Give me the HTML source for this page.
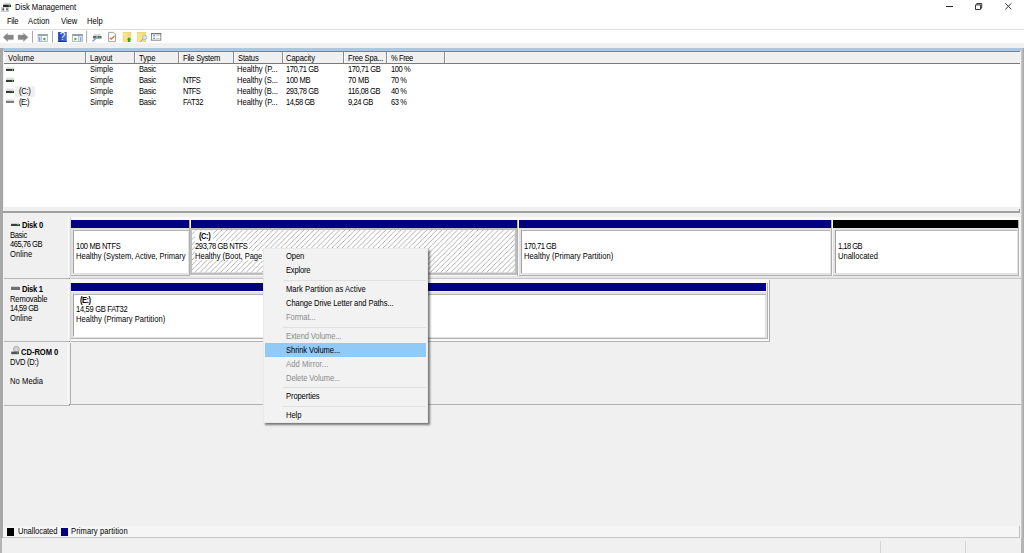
<!DOCTYPE html>
<html><head><meta charset="utf-8"><title>Disk Management</title>
<style>
html,body{margin:0;padding:0;}
body{width:1024px;height:553px;overflow:hidden;background:#f0f0f0;position:relative;font-family:"Liberation Sans",sans-serif;}
.t{position:absolute;white-space:nowrap;display:block;}
.r{position:absolute;}
svg{position:absolute;overflow:visible;}
</style></head><body>
<div class="r" style="left:0px;top:0px;width:1024px;height:43px;background:#fff;"></div>
<div class="r" style="left:0px;top:29px;width:1024px;height:1px;background:#dcdce4;"></div>
<svg style="left:0px;top:0px" width="13" height="13" viewBox="0 0 13 13">
<defs><linearGradient id="tg" x1="0" y1="0" x2="0" y2="1"><stop offset="0" stop-color="#f6f6f6"/><stop offset="1" stop-color="#c4c4c4"/></linearGradient></defs>
<path d="M3.8 2.2 H10.3 L11 4.8 H3 Z" fill="url(#tg)"/>
<rect x="3" y="4.7" width="8" height="2.2" rx="0.5" fill="#242424"/><rect x="8.6" y="5" width="1.4" height="1.6" fill="#2eb82e"/>
<rect x="1.1" y="7" width="7.8" height="4.9" fill="#c6c6c6"/><rect x="4.2" y="7.4" width="1.9" height="3.4" fill="#f6f6f6"/>
<rect x="2.5" y="8.4" width="1.5" height="1.8" fill="#5a5a5a"/><rect x="6.2" y="8.4" width="1.6" height="1.8" fill="#6a6a6a"/></svg>
<span class="t" style="left:15.00px;top:3px;font-size:8.2px;line-height:9px;color:#000;letter-spacing:-0.001px;transform:scaleX(0.927);transform-origin:0 0;">Disk Management</span>
<span class="t" style="left:7.00px;top:17px;font-size:8.2px;line-height:9px;color:#000;letter-spacing:-0.310px;transform:scaleX(0.927);transform-origin:0 0;">File</span>
<span class="t" style="left:28.30px;top:17px;font-size:8.2px;line-height:9px;color:#000;letter-spacing:0.085px;transform:scaleX(0.927);transform-origin:0 0;">Action</span>
<span class="t" style="left:60.70px;top:17px;font-size:8.2px;line-height:9px;color:#000;letter-spacing:-0.001px;transform:scaleX(0.927);transform-origin:0 0;">View</span>
<span class="t" style="left:87.00px;top:17px;font-size:8.2px;line-height:9px;color:#000;letter-spacing:-0.001px;transform:scaleX(0.927);transform-origin:0 0;">Help</span>
<div class="r" style="left:946.2px;top:5.95px;width:6.7px;height:0.95px;background:#2a2a2a;"></div>
<svg style="left:974.9px;top:2.8px" width="7.2" height="7" viewBox="0 0 7.2 7"><path d="M0.5 1.9 H5.6 V6.5 H0.5 Z M1.8 1.9 V0.5 H6.7 V5.1 H5.6" fill="none" stroke="#2a2a2a" stroke-width="0.95"/></svg>
<svg style="left:1004.6px;top:3.1px" width="6.8" height="6.6" viewBox="0 0 6.8 6.6"><path d="M0.3 0.3 L6.4 6.3 M6.4 0.3 L0.3 6.3" fill="none" stroke="#2a2a2a" stroke-width="0.95"/></svg>
<svg style="left:0px;top:30px" width="170" height="14" viewBox="0 30 170 14">
<defs><linearGradient id="hg" x1="0" y1="0" x2="1" y2="0"><stop offset="0" stop-color="#2442b4"/><stop offset="1" stop-color="#4a72e2"/></linearGradient>
<linearGradient id="fg" x1="0" y1="0" x2="1" y2="0"><stop offset="0" stop-color="#fbe89c"/><stop offset="1" stop-color="#f6d870"/></linearGradient></defs>
<path d="M3.05 37.3 L7.7 33 V34.9 H13.5 V39.7 H7.7 V41.7 Z" fill="#858585" stroke="#b4b4b4" stroke-width="0.5"/>
<path d="M28.2 37.3 L23.4 33 V34.9 H18 V39.7 H23.4 V41.7 Z" fill="#858585" stroke="#b4b4b4" stroke-width="0.5"/>
<rect x="32" y="31" width="0.9" height="11.7" fill="#a0a0a0"/>
<rect x="52" y="31" width="0.9" height="11.7" fill="#a0a0a0"/>
<rect x="86.2" y="31" width="0.9" height="11.7" fill="#a0a0a0"/>
<!-- show/hide tree -->
<rect x="37.8" y="34.1" width="9.9" height="7.6" fill="#fafcff"/><rect x="37.8" y="34.1" width="9.9" height="1.9" fill="#98a4b6"/>
<rect x="38.2" y="36" width="3" height="5.4" fill="#dfe8f4"/><rect x="39" y="37.2" width="1.2" height="3.6" fill="#6ea4e0"/>
<rect x="41.3" y="36" width="0.7" height="5.7" fill="#a8b0bc"/>
<path d="M45.3 37.3 V40.8 L42.6 39.05 Z" fill="#34b434"/>
<rect x="38.1" y="34.4" width="9.3" height="7" fill="none" stroke="#9aa4b2" stroke-width="0.7"/>
<!-- help -->
<rect x="58.1" y="32" width="8.7" height="10" fill="url(#hg)"/><rect x="58.1" y="41" width="8.7" height="1" fill="#1c3490"/>
<text x="62.6" y="40.3" font-family="Liberation Sans" font-size="10" fill="#fff" text-anchor="middle">?</text>
<!-- show/hide action pane -->
<rect x="72.2" y="34.1" width="10.5" height="7.6" fill="#fafcff"/><rect x="72.2" y="34.1" width="10.5" height="1.9" fill="#8e9aac"/>
<rect x="79" y="36" width="3.4" height="5.4" fill="#dfe8f4"/><rect x="80" y="37.2" width="1.2" height="3.6" fill="#6ea4e0"/>
<rect x="78" y="36" width="0.7" height="5.7" fill="#a8b0bc"/>
<path d="M74.5 37.3 V40.8 L77 39.05 Z" fill="#34b434"/>
<rect x="72.5" y="34.4" width="9.9" height="7" fill="none" stroke="#9aa4b2" stroke-width="0.7"/>
<!-- connect -->
<path d="M93.8 34 H100.8 L101.5 36 H93.1 Z" fill="#dcdcdc"/>
<rect x="93.1" y="35.9" width="8.4" height="2.7" rx="0.5" fill="#5c5c5c"/><rect x="99" y="36.5" width="1.3" height="1.5" fill="#2cc42c"/>
<path d="M97.2 37.2 L92.4 41.5" stroke="#7e9ebc" stroke-width="1.3" fill="none"/><circle cx="97" cy="37.3" r="1.2" fill="#8eaac6"/>
<!-- doc check -->
<path d="M108.5 32.4 H113.6 L115.5 34.3 V41.6 H108.5 Z" fill="#fff" stroke="#8e8e8e" stroke-width="0.8"/>
<path d="M109.7 37.6 L111.3 39.2 L114.6 35.9" fill="none" stroke="#e8662e" stroke-width="1.3"/>
<!-- folder up -->
<rect x="123.2" y="32.3" width="7.5" height="9.4" fill="url(#fg)" stroke="#f0cc5c" stroke-width="0.7"/>
<path d="M129 37.2 L131.3 39.6 H130.1 V42 H127.9 V39.6 H126.7 Z" fill="#22ae22"/>
<!-- folder search -->
<rect x="137.5" y="32.3" width="7.9" height="9.4" fill="url(#fg)" stroke="#f0cc5c" stroke-width="0.7"/>
<path d="M143.2 39 L140.4 41.7" stroke="#909aa4" stroke-width="1"/>
<circle cx="144.7" cy="37.5" r="2" fill="#d4e8f6" stroke="#9ab4cc" stroke-width="0.8"/>
<!-- list -->
<rect x="151.5" y="33.5" width="9.3" height="6.7" fill="#fff" stroke="#7e7e7e" stroke-width="0.9"/><rect x="151.1" y="33.1" width="10.1" height="1.2" fill="#707070"/>
<rect x="153.3" y="35.1" width="1.5" height="1.4" fill="#3c8ae0"/><rect x="153.3" y="37.7" width="1.5" height="1.4" fill="#3c8ae0"/>
<rect x="156.3" y="35.5" width="3.2" height="0.7" fill="#a8a8a8"/><rect x="156.3" y="38.1" width="3.2" height="0.7" fill="#a8a8a8"/>
</svg>
<div class="r" style="left:0px;top:47.8px;width:3.4px;height:490.2px;background:#a8a8a8;"></div>
<div class="r" style="left:1021.2px;top:47.8px;width:2.8px;height:505.2px;background:linear-gradient(to right,#cfcfcf,#a2a2a2);"></div>
<div class="r" style="left:3px;top:48px;width:1018px;height:3px;background:#a9c8e8;"></div>
<div class="r" style="left:3.5px;top:51px;width:1016.5px;height:156.5px;background:#fff;"></div>
<div class="r" style="left:3.5px;top:51px;width:1016.5px;height:1px;background:#808080;"></div>
<div class="r" style="left:4.5px;top:52px;width:1015.5px;height:11px;background:#f0f0f0;"></div>
<div class="r" style="left:3.5px;top:63px;width:1016.5px;height:1px;background:#7a7a7a;"></div>
<div class="r" style="left:85.2px;top:52px;width:1px;height:11px;background:#8c8c8c;"></div>
<div class="r" style="left:86.2px;top:52px;width:1px;height:11px;background:#fff;"></div>
<div class="r" style="left:134.2px;top:52px;width:1px;height:11px;background:#8c8c8c;"></div>
<div class="r" style="left:135.2px;top:52px;width:1px;height:11px;background:#fff;"></div>
<div class="r" style="left:177.5px;top:52px;width:1px;height:11px;background:#8c8c8c;"></div>
<div class="r" style="left:178.5px;top:52px;width:1px;height:11px;background:#fff;"></div>
<div class="r" style="left:232.89999999999998px;top:52px;width:1px;height:11px;background:#8c8c8c;"></div>
<div class="r" style="left:233.89999999999998px;top:52px;width:1px;height:11px;background:#fff;"></div>
<div class="r" style="left:281.9px;top:52px;width:1px;height:11px;background:#8c8c8c;"></div>
<div class="r" style="left:282.9px;top:52px;width:1px;height:11px;background:#fff;"></div>
<div class="r" style="left:343.4px;top:52px;width:1px;height:11px;background:#8c8c8c;"></div>
<div class="r" style="left:344.4px;top:52px;width:1px;height:11px;background:#fff;"></div>
<div class="r" style="left:385.9px;top:52px;width:1px;height:11px;background:#8c8c8c;"></div>
<div class="r" style="left:386.9px;top:52px;width:1px;height:11px;background:#fff;"></div>
<div class="r" style="left:443.59999999999997px;top:52px;width:1px;height:11px;background:#8c8c8c;"></div>
<div class="r" style="left:444.59999999999997px;top:52px;width:1px;height:11px;background:#fff;"></div>
<span class="t" style="left:7.50px;top:54px;font-size:8.2px;line-height:9px;color:#000;letter-spacing:0.188px;transform:scaleX(0.927);transform-origin:0 0;">Volume</span>
<span class="t" style="left:89.90px;top:54px;font-size:8.2px;line-height:9px;color:#000;letter-spacing:-0.076px;transform:scaleX(0.927);transform-origin:0 0;">Layout</span>
<span class="t" style="left:139.20px;top:54px;font-size:8.2px;line-height:9px;color:#000;letter-spacing:-0.001px;transform:scaleX(0.927);transform-origin:0 0;">Type</span>
<span class="t" style="left:182.60px;top:54px;font-size:8.2px;line-height:9px;color:#000;letter-spacing:-0.255px;transform:scaleX(0.927);transform-origin:0 0;">File System</span>
<span class="t" style="left:237.50px;top:54px;font-size:8.2px;line-height:9px;color:#000;letter-spacing:-0.171px;transform:scaleX(0.927);transform-origin:0 0;">Status</span>
<span class="t" style="left:286.20px;top:54px;font-size:8.2px;line-height:9px;color:#000;letter-spacing:-0.091px;transform:scaleX(0.927);transform-origin:0 0;">Capacity</span>
<span class="t" style="left:348.00px;top:54px;font-size:8.2px;line-height:9px;color:#000;letter-spacing:-0.245px;transform:scaleX(0.927);transform-origin:0 0;">Free Spa...</span>
<span class="t" style="left:390.50px;top:54px;font-size:8.2px;line-height:9px;color:#000;letter-spacing:-0.477px;transform:scaleX(0.927);transform-origin:0 0;">% Free</span>
<div class="r" style="left:6.3px;top:66.60px;width:7.8px;height:2.6px;background:linear-gradient(#f4f4f4,#cfcfcf);"></div>
<div class="r" style="left:6.1px;top:69.0px;width:8.4px;height:2.2px;background:#383838;"></div>
<div class="r" style="left:11.6px;top:69.3px;width:1.5px;height:1.5px;background:#2fc42f;"></div>
<span class="t" style="left:89.80px;top:65px;font-size:8.2px;line-height:9px;color:#000;letter-spacing:-0.001px;transform:scaleX(0.927);transform-origin:0 0;">Simple</span>
<span class="t" style="left:139.20px;top:65px;font-size:8.2px;line-height:9px;color:#000;letter-spacing:-0.321px;transform:scaleX(0.927);transform-origin:0 0;">Basic</span>
<span class="t" style="left:237.20px;top:65px;font-size:8.2px;line-height:9px;color:#000;letter-spacing:-0.020px;transform:scaleX(0.927);transform-origin:0 0;">Healthy (P...</span>
<span class="t" style="left:286.20px;top:65px;font-size:8.2px;line-height:9px;color:#000;letter-spacing:-0.485px;transform:scaleX(0.927);transform-origin:0 0;">170,71 GB</span>
<span class="t" style="left:348.00px;top:65px;font-size:8.2px;line-height:9px;color:#000;letter-spacing:-0.485px;transform:scaleX(0.927);transform-origin:0 0;">170,71 GB</span>
<span class="t" style="left:390.60px;top:65px;font-size:8.2px;line-height:9px;color:#000;letter-spacing:-0.475px;transform:scaleX(0.927);transform-origin:0 0;">100 %</span>
<div class="r" style="left:6.3px;top:77.30px;width:7.8px;height:2.6px;background:linear-gradient(#f4f4f4,#cfcfcf);"></div>
<div class="r" style="left:6.1px;top:79.7px;width:8.4px;height:2.2px;background:#383838;"></div>
<div class="r" style="left:11.6px;top:80.0px;width:1.5px;height:1.5px;background:#2fc42f;"></div>
<span class="t" style="left:89.80px;top:76px;font-size:8.2px;line-height:9px;color:#000;letter-spacing:-0.001px;transform:scaleX(0.927);transform-origin:0 0;">Simple</span>
<span class="t" style="left:139.20px;top:76px;font-size:8.2px;line-height:9px;color:#000;letter-spacing:-0.321px;transform:scaleX(0.927);transform-origin:0 0;">Basic</span>
<span class="t" style="left:182.80px;top:76px;font-size:8.2px;line-height:9px;color:#000;letter-spacing:-0.741px;transform:scaleX(0.927);transform-origin:0 0;">NTFS</span>
<span class="t" style="left:237.20px;top:76px;font-size:8.2px;line-height:9px;color:#000;letter-spacing:-0.085px;transform:scaleX(0.927);transform-origin:0 0;">Healthy (S...</span>
<span class="t" style="left:286.20px;top:76px;font-size:8.2px;line-height:9px;color:#000;letter-spacing:-0.323px;transform:scaleX(0.927);transform-origin:0 0;">100 MB</span>
<span class="t" style="left:348.00px;top:76px;font-size:8.2px;line-height:9px;color:#000;letter-spacing:-0.188px;transform:scaleX(0.927);transform-origin:0 0;">70 MB</span>
<span class="t" style="left:390.60px;top:76px;font-size:8.2px;line-height:9px;color:#000;letter-spacing:-0.465px;transform:scaleX(0.927);transform-origin:0 0;">70 %</span>
<div class="r" style="left:15.2px;top:86px;width:19.6px;height:10.5px;background:#f0f0f0;"></div>
<div class="r" style="left:6.3px;top:88.10px;width:7.8px;height:2.6px;background:linear-gradient(#f4f4f4,#cfcfcf);"></div>
<div class="r" style="left:6.1px;top:90.5px;width:8.4px;height:2.2px;background:#383838;"></div>
<div class="r" style="left:11.6px;top:90.8px;width:1.5px;height:1.5px;background:#2fc42f;"></div>
<span class="t" style="left:18.80px;top:87px;font-size:8.2px;line-height:9px;color:#000;letter-spacing:-0.341px;transform:scaleX(0.927);transform-origin:0 0;">(C:)</span>
<span class="t" style="left:89.80px;top:87px;font-size:8.2px;line-height:9px;color:#000;letter-spacing:-0.001px;transform:scaleX(0.927);transform-origin:0 0;">Simple</span>
<span class="t" style="left:139.20px;top:87px;font-size:8.2px;line-height:9px;color:#000;letter-spacing:-0.321px;transform:scaleX(0.927);transform-origin:0 0;">Basic</span>
<span class="t" style="left:182.80px;top:87px;font-size:8.2px;line-height:9px;color:#000;letter-spacing:-0.741px;transform:scaleX(0.927);transform-origin:0 0;">NTFS</span>
<span class="t" style="left:237.20px;top:87px;font-size:8.2px;line-height:9px;color:#000;letter-spacing:-0.085px;transform:scaleX(0.927);transform-origin:0 0;">Healthy (B...</span>
<span class="t" style="left:286.20px;top:87px;font-size:8.2px;line-height:9px;color:#000;letter-spacing:-0.485px;transform:scaleX(0.927);transform-origin:0 0;">293,78 GB</span>
<span class="t" style="left:348.00px;top:87px;font-size:8.2px;line-height:9px;color:#000;letter-spacing:-0.411px;transform:scaleX(0.927);transform-origin:0 0;">116,08 GB</span>
<span class="t" style="left:390.60px;top:87px;font-size:8.2px;line-height:9px;color:#000;letter-spacing:-0.465px;transform:scaleX(0.927);transform-origin:0 0;">40 %</span>
<div class="r" style="left:6.3px;top:98.90px;width:7.8px;height:2.6px;background:linear-gradient(#f4f4f4,#cfcfcf);"></div>
<div class="r" style="left:6.1px;top:101.30000000000001px;width:8.4px;height:2.2px;background:#7c7c7c;"></div>
<span class="t" style="left:18.80px;top:98px;font-size:8.2px;line-height:9px;color:#000;letter-spacing:-0.578px;transform:scaleX(0.927);transform-origin:0 0;">(E:)</span>
<span class="t" style="left:89.80px;top:98px;font-size:8.2px;line-height:9px;color:#000;letter-spacing:-0.001px;transform:scaleX(0.927);transform-origin:0 0;">Simple</span>
<span class="t" style="left:139.20px;top:98px;font-size:8.2px;line-height:9px;color:#000;letter-spacing:-0.321px;transform:scaleX(0.927);transform-origin:0 0;">Basic</span>
<span class="t" style="left:182.80px;top:98px;font-size:8.2px;line-height:9px;color:#000;letter-spacing:-0.373px;transform:scaleX(0.927);transform-origin:0 0;">FAT32</span>
<span class="t" style="left:237.20px;top:98px;font-size:8.2px;line-height:9px;color:#000;letter-spacing:-0.020px;transform:scaleX(0.927);transform-origin:0 0;">Healthy (P...</span>
<span class="t" style="left:286.20px;top:98px;font-size:8.2px;line-height:9px;color:#000;letter-spacing:-0.488px;transform:scaleX(0.927);transform-origin:0 0;">14,58 GB</span>
<span class="t" style="left:348.00px;top:98px;font-size:8.2px;line-height:9px;color:#000;letter-spacing:-0.468px;transform:scaleX(0.927);transform-origin:0 0;">9,24 GB</span>
<span class="t" style="left:390.60px;top:98px;font-size:8.2px;line-height:9px;color:#000;letter-spacing:-0.465px;transform:scaleX(0.927);transform-origin:0 0;">63 %</span>
<div class="r" style="left:3.2px;top:207.3px;width:1017.6px;height:4px;background:#f0f0f0;"></div>
<div class="r" style="left:3.2px;top:211.4px;width:1016.6px;height:1.4px;background:#a0a0a0;"></div>
<div class="r" style="left:1018.8px;top:209px;width:1px;height:3.5px;background:#909090;"></div>
<div class="r" style="left:70.7px;top:217.2px;width:949px;height:59px;background:#f9f9f5;"></div>
<div class="r" style="left:4px;top:213.4px;width:65.2px;height:64.6px;background:#f0f0f0;"></div>
<div class="r" style="left:68.2px;top:215.9px;width:1.2px;height:61.599999999999994px;background:#fbfbfb;"></div>
<div class="r" style="left:69.5px;top:216.9px;width:1.2px;height:61.099999999999994px;background:#d2d2d2;"></div>
<div class="r" style="left:4px;top:278.0px;width:66.2px;height:0.9px;background:#b8b8b8;"></div>
<div class="r" style="left:69.2px;top:277.8px;width:1.0px;height:1.1px;background:#808080;"></div>
<div class="r" style="left:70.9px;top:219.6px;width:118.04999999999998px;height:8.3px;background:#000080;"></div>
<div class="r" style="left:70.9px;top:228.0px;width:119.44999999999999px;height:47.9px;background:#e2e2e2;"></div>
<div class="r" style="left:70.9px;top:274.7px;width:119.44999999999999px;height:1.2px;background:#b4b4b4;"></div>
<div class="r" style="left:73.2px;top:230.1px;width:115.44999999999999px;height:0.9px;background:#b4b4b4;"></div>
<div class="r" style="left:73.2px;top:230.1px;width:0.9px;height:42.9px;background:#a0a0a0;"></div>
<div class="r" style="left:74.10000000000001px;top:231.0px;width:114.14999999999999px;height:42.3px;background:#fff;"></div>
<div class="r" style="left:189.25px;top:219.6px;width:0.9px;height:56.3px;background:#b0b0b0;"></div>
<div class="r" style="left:190.95px;top:219.6px;width:325.84999999999997px;height:8.3px;background:#000080;"></div>
<div class="r" style="left:189.64999999999998px;top:228.0px;width:327.54999999999995px;height:46.8px;background:#bebebe;"></div>
<svg style="left:192.40px;top:230.00px" width="322.80" height="42.50"><defs><pattern id="hp" width="5.12" height="5.12" patternUnits="userSpaceOnUse" patternTransform="translate(4.29,0)"><path d="M-1 1 L1 -1 M-1 6.12 L6.12 -1 M4.12 6.12 L6.12 4.12" stroke="#9c9c9c" stroke-width="0.78" fill="none"/></pattern></defs><rect width="322.80" height="42.50" fill="#fff"/><rect width="322.80" height="42.50" fill="url(#hp)"/></svg>
<div class="r" style="left:517.0999999999999px;top:219.6px;width:0.9px;height:56.3px;background:#b0b0b0;"></div>
<div class="r" style="left:518.8px;top:219.6px;width:312.0px;height:8.3px;background:#000080;"></div>
<div class="r" style="left:518.8px;top:228.0px;width:313.4px;height:47.9px;background:#e2e2e2;"></div>
<div class="r" style="left:518.8px;top:274.7px;width:313.4px;height:1.2px;background:#b4b4b4;"></div>
<div class="r" style="left:521.0999999999999px;top:230.1px;width:309.4px;height:0.9px;background:#b4b4b4;"></div>
<div class="r" style="left:521.0999999999999px;top:230.1px;width:0.9px;height:42.9px;background:#a0a0a0;"></div>
<div class="r" style="left:522.0px;top:231.0px;width:308.09999999999997px;height:42.3px;background:#fff;"></div>
<div class="r" style="left:831.0999999999999px;top:219.6px;width:0.9px;height:56.3px;background:#b0b0b0;"></div>
<div class="r" style="left:832.8px;top:219.6px;width:185.0px;height:8.3px;background:#000;"></div>
<div class="r" style="left:832.8px;top:228.0px;width:186.4px;height:47.9px;background:#e2e2e2;"></div>
<div class="r" style="left:832.8px;top:274.7px;width:186.4px;height:1.2px;background:#b4b4b4;"></div>
<div class="r" style="left:835.0999999999999px;top:230.1px;width:182.4px;height:0.9px;background:#b4b4b4;"></div>
<div class="r" style="left:835.0999999999999px;top:230.1px;width:0.9px;height:42.9px;background:#a0a0a0;"></div>
<div class="r" style="left:836.0px;top:231.0px;width:181.10000000000002px;height:42.3px;background:#fff;"></div>
<div class="r" style="left:1018.0999999999999px;top:219.6px;width:0.9px;height:56.3px;background:#b0b0b0;"></div>
<div class="r" style="left:70.7px;top:276px;width:950px;height:1.5px;background:#e6e6e6;"></div>
<div class="r" style="left:70.7px;top:277.5px;width:950px;height:1.2px;background:#c6c6c6;"></div>
<div class="r" style="left:11.4px;top:221.6px;width:7.8px;height:2.2px;background:linear-gradient(#fdfdfd,#c4c4c4);"></div>
<div class="r" style="left:11px;top:223.6px;width:8.6px;height:2.5px;background:#3c3c3c;"></div>
<div class="r" style="left:17px;top:224.1px;width:1.5px;height:1.4px;background:#2fc42f;"></div>
<span class="t" style="left:21.70px;top:221px;font-size:8.2px;line-height:9px;color:#000;font-weight:bold;letter-spacing:-0.269px;transform:scaleX(0.927);transform-origin:0 0;">Disk 0</span>
<span class="t" style="left:9.80px;top:231px;font-size:8.2px;line-height:9px;color:#000;letter-spacing:-0.364px;transform:scaleX(0.927);transform-origin:0 0;">Basic</span>
<span class="t" style="left:9.80px;top:240px;font-size:8.2px;line-height:9px;color:#000;letter-spacing:-0.497px;transform:scaleX(0.927);transform-origin:0 0;">465,76 GB</span>
<span class="t" style="left:9.80px;top:250px;font-size:8.2px;line-height:9px;color:#000;letter-spacing:0.041px;transform:scaleX(0.927);transform-origin:0 0;">Online</span>
<span class="t" style="left:75.60px;top:242px;font-size:8.2px;line-height:9px;color:#000;letter-spacing:-0.358px;transform:scaleX(0.927);transform-origin:0 0;">100 MB NTFS</span>
<span class="t" style="left:75.60px;top:252px;font-size:8.2px;line-height:9px;color:#000;letter-spacing:-0.036px;transform:scaleX(0.927);transform-origin:0 0;">Healthy (System, Active, Primary</span>
<div class="r" style="left:194.8px;top:231.3px;width:18px;height:9.6px;background:#fff;"></div>
<div class="r" style="left:194.8px;top:240.9px;width:54.3px;height:9.7px;background:#fff;"></div>
<div class="r" style="left:194.8px;top:250.6px;width:69px;height:9.8px;background:#fff;"></div>
<span class="t" style="left:199.20px;top:232px;font-size:8.2px;line-height:9px;color:#000;font-weight:bold;letter-spacing:-0.481px;transform:scaleX(0.927);transform-origin:0 0;">(C:)</span>
<span class="t" style="left:194.90px;top:242px;font-size:8.2px;line-height:9px;color:#000;letter-spacing:-0.439px;transform:scaleX(0.927);transform-origin:0 0;">293,78 GB NTFS</span>
<span class="t" style="left:194.90px;top:252px;font-size:8.2px;line-height:9px;color:#000;letter-spacing:-0.041px;transform:scaleX(0.927);transform-origin:0 0;">Healthy (Boot, Page</span>
<span class="t" style="left:523.80px;top:242px;font-size:8.2px;line-height:9px;color:#000;letter-spacing:-0.497px;transform:scaleX(0.927);transform-origin:0 0;">170,71 GB</span>
<span class="t" style="left:523.80px;top:252px;font-size:8.2px;line-height:9px;color:#000;letter-spacing:0.007px;transform:scaleX(0.927);transform-origin:0 0;">Healthy (Primary Partition)</span>
<span class="t" style="left:838.20px;top:242px;font-size:8.2px;line-height:9px;color:#000;letter-spacing:-0.584px;transform:scaleX(0.927);transform-origin:0 0;">1,18 GB</span>
<span class="t" style="left:838.20px;top:252px;font-size:8.2px;line-height:9px;color:#000;letter-spacing:-0.024px;transform:scaleX(0.927);transform-origin:0 0;">Unallocated</span>
<div class="r" style="left:70.7px;top:278.7px;width:698.5px;height:62.5px;background:#f8f8f8;"></div>
<div class="r" style="left:4px;top:279px;width:65.2px;height:61.8px;background:#f0f0f0;"></div>
<div class="r" style="left:68.2px;top:281.5px;width:1.2px;height:58.8px;background:#fbfbfb;"></div>
<div class="r" style="left:69.5px;top:282.5px;width:1.2px;height:58.3px;background:#d2d2d2;"></div>
<div class="r" style="left:4px;top:340.8px;width:66.2px;height:0.9px;background:#b8b8b8;"></div>
<div class="r" style="left:69.2px;top:340.6px;width:1.0px;height:1.1px;background:#808080;"></div>
<div class="r" style="left:70.9px;top:283.1px;width:695.3000000000001px;height:8.3px;background:#000080;"></div>
<div class="r" style="left:70.9px;top:291.5px;width:696.7px;height:47.9px;background:#e2e2e2;"></div>
<div class="r" style="left:70.9px;top:338.2px;width:696.7px;height:1.2px;background:#b4b4b4;"></div>
<div class="r" style="left:73.2px;top:293.6px;width:692.7px;height:0.9px;background:#b4b4b4;"></div>
<div class="r" style="left:73.2px;top:293.6px;width:0.9px;height:42.9px;background:#a0a0a0;"></div>
<div class="r" style="left:74.10000000000001px;top:294.5px;width:691.4px;height:42.3px;background:#fff;"></div>
<div class="r" style="left:766.5px;top:283.1px;width:0.9px;height:56.3px;background:#b0b0b0;"></div>
<div class="r" style="left:769px;top:279.7px;width:1px;height:62px;background:#b0b0b0;"></div>
<div class="r" style="left:70.5px;top:340.8px;width:699.5px;height:1px;background:#b4b4b4;"></div>
<div class="r" style="left:11.4px;top:285.2px;width:7.8px;height:2.2px;background:linear-gradient(#fdfdfd,#c4c4c4);"></div>
<div class="r" style="left:11px;top:287.2px;width:8.6px;height:2.5px;background:#707070;"></div>
<span class="t" style="left:21.70px;top:285px;font-size:8.2px;line-height:9px;color:#000;font-weight:bold;letter-spacing:-0.323px;transform:scaleX(0.927);transform-origin:0 0;">Disk 1</span>
<span class="t" style="left:9.80px;top:295px;font-size:8.2px;line-height:9px;color:#000;letter-spacing:-0.126px;transform:scaleX(0.927);transform-origin:0 0;">Removable</span>
<span class="t" style="left:9.80px;top:304px;font-size:8.2px;line-height:9px;color:#000;letter-spacing:-0.528px;transform:scaleX(0.927);transform-origin:0 0;">14,59 GB</span>
<span class="t" style="left:9.80px;top:314px;font-size:8.2px;line-height:9px;color:#000;letter-spacing:0.041px;transform:scaleX(0.927);transform-origin:0 0;">Online</span>
<span class="t" style="left:79.60px;top:296px;font-size:8.2px;line-height:9px;color:#000;font-weight:bold;letter-spacing:-0.557px;transform:scaleX(0.927);transform-origin:0 0;">(E:)</span>
<span class="t" style="left:75.90px;top:305px;font-size:8.2px;line-height:9px;color:#000;letter-spacing:-0.351px;transform:scaleX(0.927);transform-origin:0 0;">14,59 GB FAT32</span>
<span class="t" style="left:75.90px;top:315px;font-size:8.2px;line-height:9px;color:#000;letter-spacing:0.007px;transform:scaleX(0.927);transform-origin:0 0;">Healthy (Primary Partition)</span>
<div class="r" style="left:4px;top:342.5px;width:65.2px;height:62px;background:#f0f0f0;"></div>
<div class="r" style="left:68.2px;top:345.0px;width:1.2px;height:59px;background:#fbfbfb;"></div>
<div class="r" style="left:69.5px;top:346.0px;width:1.2px;height:58.5px;background:#d2d2d2;"></div>
<div class="r" style="left:4px;top:404.5px;width:66.2px;height:0.9px;background:#b8b8b8;"></div>
<div class="r" style="left:69.2px;top:404.3px;width:1.0px;height:1.1px;background:#808080;"></div>
<div class="r" style="left:69.8px;top:343px;width:1px;height:62px;background:#b0b0b0;"></div>
<div class="r" style="left:70px;top:404px;width:951px;height:1px;background:#b4b4b4;"></div>
<svg style="left:11px;top:345.5px" width="9" height="9" viewBox="0 0 9 9"><circle cx="5.4" cy="3.2" r="2.9" fill="#d8d8d8" stroke="#888" stroke-width="0.6"/><circle cx="5.4" cy="3.2" r="0.9" fill="#fff" stroke="#999" stroke-width="0.4"/>
<rect x="0.2" y="5.6" width="7.8" height="2.6" fill="#555"/><rect x="6" y="6.4" width="1.4" height="1.1" fill="#3c3"/></svg>
<span class="t" style="left:21.40px;top:348px;font-size:8.2px;line-height:9px;color:#000;font-weight:bold;letter-spacing:-0.038px;transform:scaleX(0.927);transform-origin:0 0;">CD-ROM 0</span>
<span class="t" style="left:9.80px;top:358px;font-size:8.2px;line-height:9px;color:#000;letter-spacing:-0.300px;transform:scaleX(0.927);transform-origin:0 0;">DVD (D:)</span>
<span class="t" style="left:9.80px;top:377px;font-size:8.2px;line-height:9px;color:#000;letter-spacing:0.090px;transform:scaleX(0.927);transform-origin:0 0;">No Media</span>
<div class="r" style="left:3.2px;top:525.8px;width:1016px;height:11.2px;background:#f5f5f5;"></div>
<div class="r" style="left:3.2px;top:537px;width:1017px;height:1.2px;background:#c8c8c8;"></div>
<div class="r" style="left:1019.2px;top:526px;width:1px;height:11.5px;background:#c0c0c0;"></div>
<div class="r" style="left:7.3px;top:527.8px;width:6.8px;height:8px;background:#000;"></div>
<div class="r" style="left:61.1px;top:527.8px;width:6.9px;height:8px;background:#000080;"></div>
<span class="t" style="left:17.80px;top:527px;font-size:8.2px;line-height:9px;color:#000;letter-spacing:-0.063px;transform:scaleX(0.927);transform-origin:0 0;">Unallocated</span>
<span class="t" style="left:71.10px;top:527px;font-size:8.2px;line-height:9px;color:#000;letter-spacing:0.093px;transform:scaleX(0.927);transform-origin:0 0;">Primary partition</span>
<div class="r" style="left:0px;top:538.2px;width:1024px;height:15px;background:#f0f0f0;"></div>
<div class="r" style="left:0px;top:538.2px;width:1.7px;height:15px;background:#b4b4b4;"></div>
<div class="r" style="left:1021.3px;top:538.2px;width:2.7px;height:15px;background:#b4b4b4;"></div>
<div class="r" style="left:880px;top:541px;width:1px;height:12px;background:#d4d4d4;"></div>
<div class="r" style="left:965px;top:541px;width:1px;height:12px;background:#d4d4d4;"></div>
<div class="r" style="left:263.3px;top:248.2px;width:164.6px;height:174.8px;background:#f2f2f2;box-shadow:1.5px 1.5px 2px rgba(0,0,0,0.5), inset 0 0 0 0.7px #e6e6e6;"></div>
<div class="r" style="left:265.2px;top:343.3px;width:160.8px;height:13.4px;background:#91c9f7;"></div>
<span class="t" style="left:285.80px;top:252px;font-size:8.2px;line-height:9px;color:#000;letter-spacing:-0.107px;transform:scaleX(0.927);transform-origin:0 0;">Open</span>
<span class="t" style="left:285.80px;top:266px;font-size:8.2px;line-height:9px;color:#000;letter-spacing:-0.227px;transform:scaleX(0.927);transform-origin:0 0;">Explore</span>
<span class="t" style="left:285.80px;top:285px;font-size:8.2px;line-height:9px;color:#000;letter-spacing:0.017px;transform:scaleX(0.927);transform-origin:0 0;">Mark Partition as Active</span>
<span class="t" style="left:285.80px;top:299px;font-size:8.2px;line-height:9px;color:#000;letter-spacing:-0.105px;transform:scaleX(0.927);transform-origin:0 0;">Change Drive Letter and Paths...</span>
<span class="t" style="left:285.80px;top:313px;font-size:8.2px;line-height:9px;color:#8c8c8c;letter-spacing:-0.109px;transform:scaleX(0.927);transform-origin:0 0;">Format...</span>
<span class="t" style="left:285.80px;top:332px;font-size:8.2px;line-height:9px;color:#8c8c8c;letter-spacing:-0.139px;transform:scaleX(0.927);transform-origin:0 0;">Extend Volume...</span>
<span class="t" style="left:285.80px;top:346px;font-size:8.2px;line-height:9px;color:#000;letter-spacing:-0.084px;transform:scaleX(0.927);transform-origin:0 0;">Shrink Volume...</span>
<span class="t" style="left:285.80px;top:360px;font-size:8.2px;line-height:9px;color:#8c8c8c;letter-spacing:0.083px;transform:scaleX(0.927);transform-origin:0 0;">Add Mirror...</span>
<span class="t" style="left:285.80px;top:374px;font-size:8.2px;line-height:9px;color:#8c8c8c;letter-spacing:-0.113px;transform:scaleX(0.927);transform-origin:0 0;">Delete Volume...</span>
<span class="t" style="left:285.80px;top:392px;font-size:8.2px;line-height:9px;color:#000;letter-spacing:-0.113px;transform:scaleX(0.927);transform-origin:0 0;">Properties</span>
<span class="t" style="left:285.80px;top:411px;font-size:8.2px;line-height:9px;color:#000;letter-spacing:-0.063px;transform:scaleX(0.927);transform-origin:0 0;">Help</span>
<div class="r" style="left:283.4px;top:280px;width:142.6px;height:0.9px;background:#e0e0e0;"></div>
<div class="r" style="left:283.4px;top:326.6px;width:142.6px;height:0.9px;background:#e0e0e0;"></div>
<div class="r" style="left:283.4px;top:387.4px;width:142.6px;height:0.9px;background:#e0e0e0;"></div>
<div class="r" style="left:283.4px;top:406.4px;width:142.6px;height:0.9px;background:#e0e0e0;"></div>
</body></html>
